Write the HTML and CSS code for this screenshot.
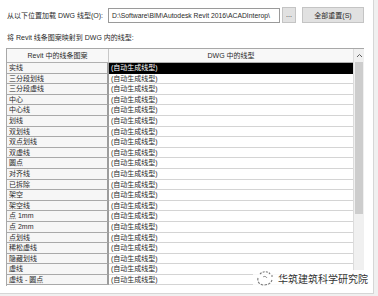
FILE: index.html
```html
<!DOCTYPE html>
<html lang="zh-CN">
<head>
<meta charset="utf-8">
<link rel="stylesheet" href="styles.css">
</head>
<body>
<div class="panel">
  <div class="load-row">
    <span class="label">从以下位置加载 DWG 线型(O):</span>
    <div class="path-input">D:\Software\BIM\Autodesk Revit 2016\ACADInterop\</div>
    <button class="btn btn-dots">...</button>
    <button class="btn btn-reset">全部重置(S)</button>
  </div>
  <div class="map-label">将 Revit 线条图案映射到 DWG 内的线型:</div>
  <div class="table-wrap">
    <div class="table">
      <div class="row head">
        <div class="c1">Revit 中的线条图案</div>
        <div class="c2">DWG 中的线型</div>
      </div>
      <div class="row sel"><div class="c1">实线</div><div class="c2">(自动生成线型)</div></div>
      <div class="row"><div class="c1">三分段划线</div><div class="c2">(自动生成线型)</div></div>
      <div class="row"><div class="c1">三分段虚线</div><div class="c2">(自动生成线型)</div></div>
      <div class="row"><div class="c1">中心</div><div class="c2">(自动生成线型)</div></div>
      <div class="row"><div class="c1">中心线</div><div class="c2">(自动生成线型)</div></div>
      <div class="row"><div class="c1">划线</div><div class="c2">(自动生成线型)</div></div>
      <div class="row"><div class="c1">双划线</div><div class="c2">(自动生成线型)</div></div>
      <div class="row"><div class="c1">双点划线</div><div class="c2">(自动生成线型)</div></div>
      <div class="row"><div class="c1">双虚线</div><div class="c2">(自动生成线型)</div></div>
      <div class="row"><div class="c1">圆点</div><div class="c2">(自动生成线型)</div></div>
      <div class="row"><div class="c1">对齐线</div><div class="c2">(自动生成线型)</div></div>
      <div class="row"><div class="c1">已拆除</div><div class="c2">(自动生成线型)</div></div>
      <div class="row"><div class="c1">架空</div><div class="c2">(自动生成线型)</div></div>
      <div class="row"><div class="c1">架空线</div><div class="c2">(自动生成线型)</div></div>
      <div class="row"><div class="c1">点 1mm</div><div class="c2">(自动生成线型)</div></div>
      <div class="row"><div class="c1">点 2mm</div><div class="c2">(自动生成线型)</div></div>
      <div class="row"><div class="c1">点划线</div><div class="c2">(自动生成线型)</div></div>
      <div class="row"><div class="c1">稀松虚线</div><div class="c2">(自动生成线型)</div></div>
      <div class="row"><div class="c1">隐藏划线</div><div class="c2">(自动生成线型)</div></div>
      <div class="row"><div class="c1">虚线</div><div class="c2">(自动生成线型)</div></div>
      <div class="row"><div class="c1">虚线 - 圆点</div><div class="c2">(自动生成线型)</div></div>
    </div>
    <div class="scrollbar">
      <div class="arrow">
        <svg width="7" height="5" viewBox="0 0 7 5"><path d="M1 4 L3.5 1.5 L6 4" fill="none" stroke="#606060" stroke-width="1"/></svg>
      </div>
      <div class="thumb"></div>
    </div>
  </div>
  <div class="watermark">
    <svg class="logo" width="20" height="16" viewBox="0 0 20 16">
      <path d="M5 3 C8 0 13 0 15 3" fill="none" stroke="#777" stroke-width="1.1" stroke-dasharray="2 1.2"/>
      <path d="M3 7 C2 11 5 14 9 14 C13 14 16 12 17 9" fill="none" stroke="#777" stroke-width="1.1" stroke-dasharray="2.5 1.2"/>
      <path d="M8 6 C9 5 11 5 12 7" fill="none" stroke="#999" stroke-width="1"/>
      <path d="M16 5 L18 5" stroke="#777" stroke-width="1"/>
    </svg>
    <span class="wm-text">华筑建筑科学研究院</span>
  </div>
</div>
</body>
</html>
```
FILE: styles.css
```css
* { box-sizing: border-box; }
html, body { margin: 0; padding: 0; }
body {
  width: 378px;
  height: 296px;
  background: #f0f0f0;
  font-family: "Liberation Sans", "Noto Sans CJK SC", sans-serif;
  font-size: 7px;
  color: #2a2a2a;
  overflow: hidden;
}
.panel {
  position: relative;
  width: 374px;
  height: 294px;
  background: #ffffff;
  border-right: 1px solid #d6d6d6;
  border-bottom: 1px solid #d6d6d6;
  padding: 7px 0 0 7px;
}
.load-row {
  display: flex;
  align-items: center;
  height: 16px;
}
.label {
  width: 101px;
  white-space: nowrap;
}
.path-input {
  width: 172px;
  height: 15px;
  border: 1px solid #9a9a9a;
  padding: 0 0 0 3px;
  line-height: 13px;
  white-space: nowrap;
  overflow: hidden;
  font-size: 6.8px;
}
.btn {
  font-family: inherit;
  font-size: 7px;
  color: #2a2a2a;
  background: #e1e1e1;
  border: 1px solid #c4c4c4;
  height: 16px;
  padding: 0;
  margin: 0;
}
.btn-dots {
  width: 14px;
  margin-left: 2px;
  line-height: 10px;
}
.btn-reset {
  width: 62px;
  margin-left: 6px;
}
.map-label {
  margin-top: 10px;
  height: 10px;
  line-height: 10px;
  white-space: nowrap;
}
.table-wrap {
  margin-top: 5px;
  margin-left: -1px;
  width: 358px;
  height: 238px;
  display: flex;
  border-left: 1px solid #a8a8a8;
  border-top: 1px solid #a8a8a8;
  overflow: hidden;
}
.table {
  width: 346px;
  height: 100%;
  overflow: hidden;
}
.row {
  display: flex;
  height: 10.6px;
  line-height: 10px;
}
.row .c1 {
  width: 102px;
  background: #f6f6f6;
  border-bottom: 1px solid #a9a9a9;
  border-right: 2px solid #9c9c9c;
  padding-left: 2px;
  white-space: nowrap;
}
.row .c2 {
  width: 244px;
  border-bottom: 1px solid #d4d4d4;
  padding-left: 2px;
  white-space: nowrap;
}
.row.head {
  height: 14px;
  line-height: 13px;
}
.row.head .c1,
.row.head .c2 {
  text-align: center;
  background: #f8f8f8;
  border-bottom: 1px solid #b0b0b0;
  padding-left: 0;
}
.row.head .c1 { border-right: 1px solid #c8c8c8; }
.row.sel .c2 {
  background: #000000;
  color: #ffffff;
  border-bottom-color: #000000;
}
.scrollbar {
  width: 11px;
  height: 100%;
  background: #f0f0f0;
  border-left: 1px solid #dcdcdc;
  display: flex;
  flex-direction: column;
  align-items: center;
}
.arrow {
  height: 13px;
  width: 100%;
  display: flex;
  align-items: center;
  justify-content: center;
}
.thumb {
  width: 8px;
  height: 152px;
  background: #cdcdcd;
}
.watermark {
  position: absolute;
  left: 253px;
  top: 270px;
  display: flex;
  align-items: center;
  gap: 3px;
  background: rgba(255,255,255,0.85);
  padding: 1px 2px;
}
.wm-text {
  font-family: "Noto Sans CJK SC", sans-serif;
  font-size: 10px;
  line-height: 14px;
  color: #333333;
  letter-spacing: 0;
}
```
